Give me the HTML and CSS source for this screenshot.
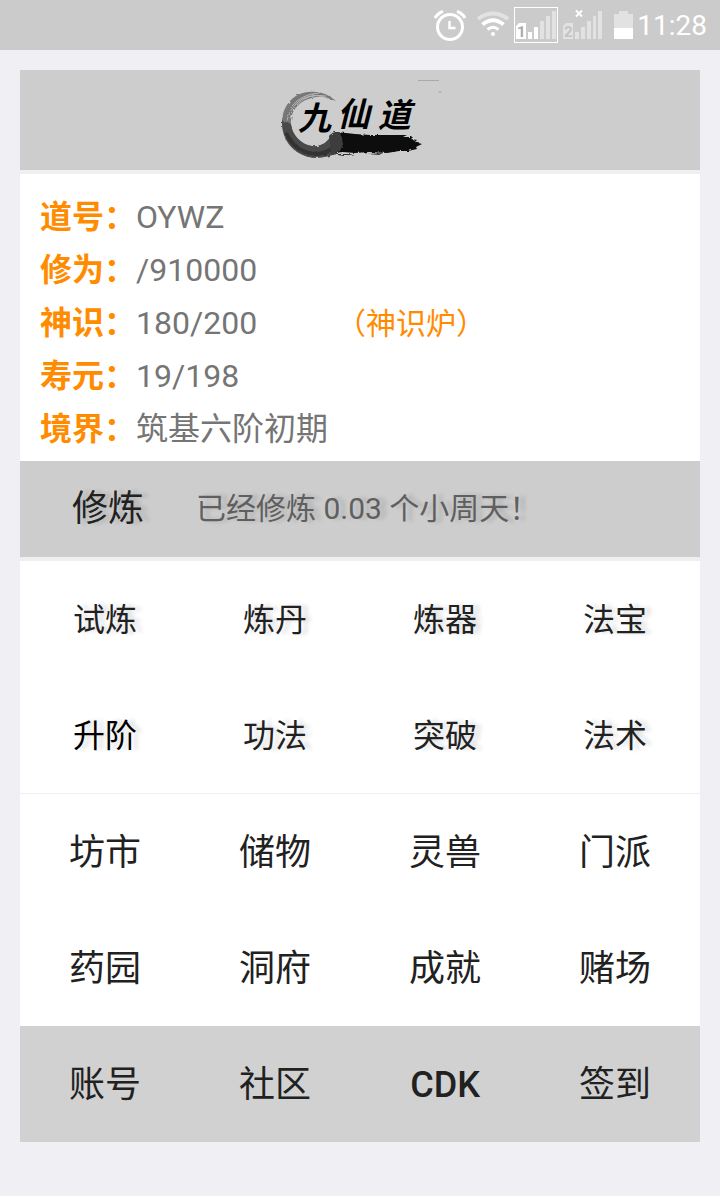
FILE: index.html
```html
<!DOCTYPE html>
<html lang="zh-CN">
<head>
  <meta charset="UTF-8">
  <meta name="viewport" content="width=device-width, initial-scale=1.0">
  <title>九仙道</title>
  <link rel="stylesheet" href="styles.css">
</head>

<body>
  <div class="status-bar">
    <!-- alarm -->
    <svg class="alarm" width="32" height="36" viewBox="0 0 32 36" fill="none" stroke="#fff">
      <circle cx="16" cy="20" r="12.5" stroke-width="3"/>
      <path d="M15.500 14v7h6" stroke-width="2.500"/>
      <path d="M1 11Q4 6 9 4.500M31 11Q28 6 23 4.500" stroke-width="3"/>
    </svg>
    <!-- wifi -->
    <svg class="wifi" width="32" height="36" viewBox="0 0 32 36" fill="none" stroke="#fff" stroke-width="4">
      <path d="M1 12Q16 1 31 12" stroke-opacity="0.45"/>
      <path d="M5.500 17.500Q16 9 26.500 17.500"/>
      <path d="M10.500 22.500Q16 18 21.500 22.500" stroke-width="3"/>
      <circle cx="16" cy="27" r="2" fill="#fff" stroke="none"/>
    </svg>
    <!-- sim 1 -->
    <svg width="44" height="36" viewBox="0 0 44 36" fill="#fff">
      <rect x="0.500" y="0.500" width="43" height="35" fill="none" stroke="#fff"/>
      <path d="M2 19l3-3h7v16H2z"/>
      <text class="sim-no" x="3" y="30" fill="#aaa">1</text>
      <path d="M14 25h4v7h-4zM20 20h4v12h-4z"/>
      <path d="M26 14h4v18h-4zM32 9h4v23h-4zM38 4h4v28h-4z" fill-opacity="0.45"/>
    </svg>
    <!-- sim 2 -->
    <svg width="44" height="36" viewBox="0 0 44 36" fill="#fff">
      <g fill-opacity="0.45">
        <path d="M5 19l3-3h7v16H5z"/>
        <path d="M17 25h4v7h-4zM23 20h4v12h-4zM29 14h4v18h-4zM35 9h3v23h-3zM40 4h4v28h-4z"/>
      </g>
      <text class="sim-no" x="6" y="30" fill="#c4c4c4">2</text>
      <path d="M18 3.500l6 6M24 3.500l-6 6" stroke="#fff" stroke-width="2"/>
    </svg>
    <!-- battery -->
    <svg class="battery" width="19" height="36" viewBox="0 0 19 36" fill="#fff">
      <path d="M5 4h9v3h5v14H0V7h5z" fill-opacity="0.45"/>
      <path d="M0 21h19v11H0z"/>
    </svg>
    <span class="time">11:28</span>
  </div>

  <main class="page">
    <header class="banner">
      <svg width="200" height="100" viewBox="0 0 200 100" role="img" aria-label="九仙道">
        <filter id="rough">
          <feTurbulence type="fractalNoise" baseFrequency="0.25" numOctaves="2" result="n"/>
          <feDisplacementMap in="SourceGraphic" in2="n" scale="3"/>
        </filter>
        <g filter="url(#rough)">
          <!-- ink ring -->
          <path d="M76 31Q64 20 48 22C31 24 22 38 22 53C22 74 38 87 56 88Q70 87 80 82L78 64Q72 64 68 70Q62 77 52 76C38 74 30 62 31 50C32 38 42 30 52 28Q62 25 70 29Z" fill="#777"/>
          <path d="M22 51C22 74 38 87 56 88Q70 87 80 82L78 64Q72 64 68 70Q62 77 52 76C40 74 32 64 31 54Z" fill="#484848"/>
          <path d="M26 63Q36 84 58 84Q70 82 76 76" fill="none" stroke="#303030" stroke-width="4"/>
          <path d="M69 29Q56 22 42 29Q31 36 27 50M59 23Q42 24 32 36M66 26Q48 23 38 34" fill="none" stroke="#b8b8b8" stroke-width="1"/>
          <!-- brush stroke -->
          <path d="M76 62l10 1 9 1 15 1 20 0 17 0-4 2 10 0-2 2 6 1-2 2 7 2-6 3 1 2-9 2-9 0-12 2-18-1-14 1-12-1-12 1z" fill="#080f0b"/>
          <path d="M69 66q5-6 11-3q5 9 0 18l-9 3z" fill="#3c3c3c"/>
          <path d="M73 84l22 0-12 2zM108 84l15-1-4 2z" fill="#333"/>
        </g>
        <path d="M158 10.500h21M178 22h4" stroke="#aaa" stroke-width="1"/>
        <text class="logo-text" x="38 77 118" y="60 56 57">九仙道</text>
      </svg>
    </header>

    <dl class="stats">
      <div class="stat"><dt>道号：</dt><dd>OYWZ</dd></div>
      <div class="stat"><dt>修为：</dt><dd>/910000</dd></div>
      <div class="stat"><dt>神识：</dt><dd>180/200</dd><dd><a href="#">（神识炉）</a></dd></div>
      <div class="stat"><dt>寿元：</dt><dd>19/198</dd></div>
      <div class="stat"><dt>境界：</dt><dd>筑基六阶初期</dd></div>
    </dl>

    <div class="train">
      <button type="button">修炼</button>
      <span>已经修炼 0.03 个小周天！</span>
    </div>

    <nav class="menu shadow">
      <a href="#">试炼</a>
      <a href="#">炼丹</a>
      <a href="#">炼器</a>
      <a href="#">法宝</a>
      <a href="#" class="active">升阶</a>
      <a href="#">功法</a>
      <a href="#">突破</a>
      <a href="#">法术</a>
    </nav>

    <nav class="menu">
      <a href="#">坊市</a>
      <a href="#">储物</a>
      <a href="#">灵兽</a>
      <a href="#">门派</a>
      <a href="#">药园</a>
      <a href="#">洞府</a>
      <a href="#">成就</a>
      <a href="#">赌场</a>
    </nav>

    <nav class="menu bottom">
      <a href="#">账号</a>
      <a href="#">社区</a>
      <a href="#" class="cdk">CDK</a>
      <a href="#">签到</a>
    </nav>
  </main>
</body>
</html>
```

FILE: styles.css
```css
* {
  box-sizing: border-box;
}

body {
  margin: 0;
  font-family: Roboto, "Noto Sans CJK SC", sans-serif;
  background: #efeff4;
  color: #212121;
}

a {
  color: inherit;
  text-decoration: none;
}

.status-bar {
  display: flex;
  align-items: center;
  justify-content: flex-end;
  height: 50px;
  padding-right: 13px;
  background: #cbcbcb;
}

.alarm {
  margin-right: 11px;
}

.wifi {
  margin-right: 5px;
}

.battery {
  margin-left: 12px;
  margin-right: 4px;
}

.sim-no {
  font-size: 15px;
  font-weight: bold;
}

.time {
  color: #fff;
  font-size: 28px;
  line-height: 32px;
  padding-top: 2px;
}

.page {
  margin: 20px;
  background: #fff;
}

.banner {
  display: flex;
  justify-content: center;
  background: #cdcdcd;
  border-bottom: 4px solid #efeff1;
}

.logo-text {
  font-family: "Noto Sans CJK SC", sans-serif;
  font-size: 33px;
  font-weight: 700;
  font-style: italic;
  fill: #000;
}

.stats {
  margin: 0;
  padding: 17px 20px 5px;
  font-size: 32px;
  line-height: 53px;
}

.stat {
  display: flex;
  height: 53px;
}

.stat dt {
  color: #ff8c00;
  font-weight: 700;
}

.stat dd {
  min-width: 200px;
  margin: 0;
  color: #757575;
}

.stat a {
  color: #ff8c00;
  font-size: 30px;
}

.train {
  display: flex;
  align-items: center;
  height: 100px;
  background: #cdcdcd;
  border-bottom: 4px solid #efefef;
  line-height: 40px;
  text-shadow: 6px 0 4px rgba(0, 0, 0, 0.15);
}

.train button {
  width: 176px;
  padding: 0;
  border: none;
  background: none;
  color: #212121;
  font: inherit;
  font-size: 36px;
  text-shadow: inherit;
  cursor: pointer;
}

.train span {
  color: #5f5f5f;
  font-size: 30px;
}

.menu {
  display: grid;
  grid-template-columns: repeat(4, 1fr);
  grid-auto-rows: 116px;
  font-size: 36px;
  line-height: 40px;
}

.menu a {
  display: flex;
  align-items: center;
  justify-content: center;
  padding-top: 2px;
}

.shadow {
  font-size: 32px;
  text-shadow: 6px 0 4px rgba(0, 0, 0, 0.15);
  border-bottom: 1px solid #f0f0f0;
}

.menu .active {
  color: #000;
}

.bottom {
  background: #d1d1d1;
}

.cdk {
  font-weight: 500;
}
```
